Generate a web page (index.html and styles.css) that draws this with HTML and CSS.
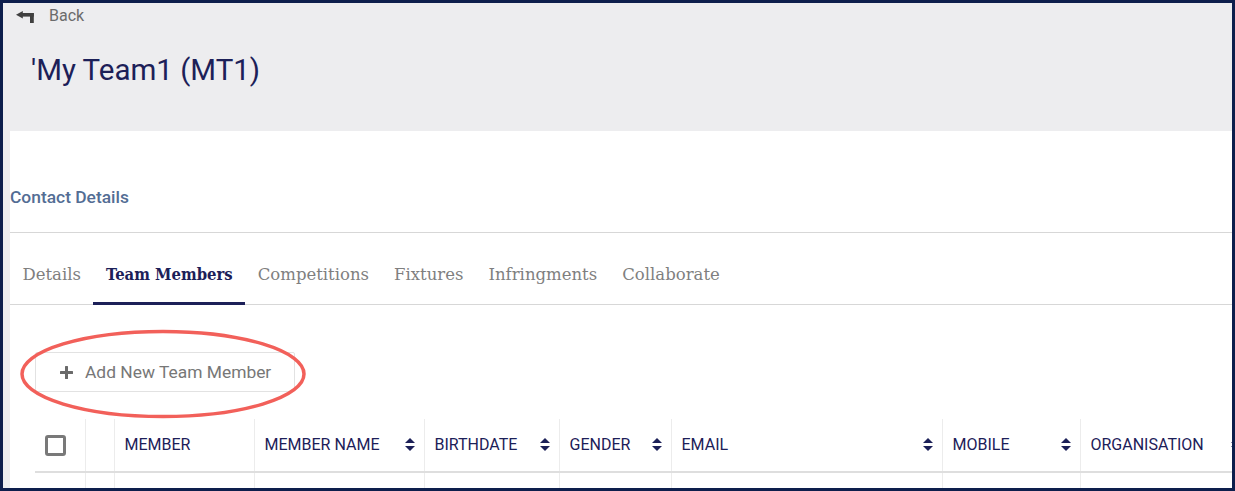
FILE: index.html
```html
<!DOCTYPE html>
<html lang="en">
<head>
<meta charset="utf-8">
<title>My Team1 (MT1)</title>
<link rel="stylesheet" href="styles.css">
</head>
<body>
<div class="frame">
  <header class="page-head">
    <a class="back" href="#">
      <svg class="back-icon" width="18" height="12" viewBox="0 0 18 12" aria-hidden="true">
        <path d="M0 3.8 L6.8 0 L6.8 7.6 Z" fill="#404040"/>
        <rect x="6" y="2" width="11.8" height="3.6" fill="#404040"/>
        <rect x="14" y="2" width="3.8" height="10" fill="#404040"/>
      </svg>
      <span>Back</span>
    </a>
    <h1 class="title">'My Team1 (MT1)</h1>
  </header>

  <main class="card">
    <div class="section-head">
      <h2 class="section-title">Contact Details</h2>
    </div>

    <nav class="tabs">
      <a class="tab" href="#">Details</a>
      <a class="tab active" href="#">Team Members</a>
      <a class="tab" href="#">Competitions</a>
      <a class="tab" href="#">Fixtures</a>
      <a class="tab" href="#">Infringments</a>
      <a class="tab" href="#">Collaborate</a>
    </nav>

    <div class="toolbar">
      <button class="add-btn" type="button">
        <svg class="plus" width="13" height="13" viewBox="0 0 13 13" aria-hidden="true">
          <rect x="5" y="0" width="3" height="13" rx="0.5" fill="#6a6a6a"/>
          <rect x="0" y="5" width="13" height="3" rx="0.5" fill="#6a6a6a"/>
        </svg>
        <span>Add New Team Member</span>
      </button>
      <svg class="highlight" width="292" height="94" viewBox="0 0 292 94" aria-hidden="true">
        <ellipse cx="146" cy="47" rx="141" ry="42.5" fill="none" stroke="#f2605a" stroke-width="3.5"/>
      </svg>
    </div>

    <table class="members">
      <colgroup>
        <col class="c-check"><col class="c-blank"><col class="c-member"><col class="c-name"><col class="c-birth"><col class="c-gender"><col class="c-email"><col class="c-mobile"><col class="c-org">
      </colgroup>
      <thead>
        <tr>
          <th><span class="checkbox"></span></th>
          <th></th>
          <th><div class="th-inner">MEMBER</div></th>
          <th><div class="th-inner">MEMBER NAME<span class="sort"></span></div></th>
          <th><div class="th-inner">BIRTHDATE<span class="sort"></span></div></th>
          <th><div class="th-inner">GENDER<span class="sort"></span></div></th>
          <th><div class="th-inner">EMAIL<span class="sort"></span></div></th>
          <th><div class="th-inner">MOBILE<span class="sort"></span></div></th>
          <th><div class="th-inner">ORGANISATION<span class="sort"></span></div></th>
        </tr>
      </thead>
      <tbody>
        <tr><td></td><td></td><td></td><td></td><td></td><td></td><td></td><td></td><td></td></tr>
      </tbody>
    </table>
  </main>
</div>
</body>
</html>
```

FILE: styles.css
```css
html, body {
  margin: 0;
  padding: 0;
}

body {
  font-family: Roboto, "Liberation Sans", Arial, sans-serif;
  background: #ffffff;
}

.frame {
  width: 1235px;
  height: 491px;
  box-sizing: border-box;
  border: 3px solid #0d1e4c;
  background: #ededef;
  overflow: hidden;
  display: flex;
  flex-direction: column;
}

/* ---------- header ---------- */
.page-head {
  height: 128px;
  flex: none;
  box-sizing: border-box;
  padding-top: 3px;
}

.back {
  display: flex;
  align-items: center;
  gap: 15px;
  padding-left: 13px;
  height: 20px;
  font-size: 16px;
  line-height: 20px;
  color: #6b6b6b;
  text-decoration: none;
}

.back-icon {
  flex: none;
  margin-top: 1px;
}

.title {
  margin: 26px 0 0 28px;
  font-size: 29.5px;
  line-height: 36px;
  font-weight: 400;
  color: #1c2058;
}

/* ---------- card ---------- */
.card {
  flex: 1;
  margin-left: 7px;
  background: #ffffff;
  overflow: hidden;
  min-width: 0;
}

.section-head {
  height: 102px;
  box-sizing: border-box;
  padding-top: 56px;
  border-bottom: 1px solid #d7d7d7;
}

.section-title {
  margin: 0;
  font-size: 17.4px;
  line-height: 20px;
  font-weight: 500;
  color: #536d94;
}

/* ---------- tabs ---------- */
.tabs {
  display: flex;
  height: 71px;
  border-bottom: 1px solid #d7d7d7;
}

.tab {
  height: 72px;
  box-sizing: border-box;
  padding: 14px 12.5px 0;
  display: flex;
  align-items: center;
  border-bottom: 3px solid transparent;
  font-family: "DejaVu Serif", "Liberation Serif", serif;
  font-size: 16.5px;
  color: #7f7f7f;
  text-decoration: none;
  white-space: nowrap;
}

.tab.active {
  font-weight: 700;
  font-stretch: condensed;
  color: #1c2058;
  border-bottom-color: #1c2058;
}

/* ---------- toolbar ---------- */
.toolbar {
  position: relative;
  padding: 47px 0 0 25px;
  height: 40px;
}

.add-btn {
  display: flex;
  align-items: center;
  gap: 12px;
  width: 260px;
  height: 40px;
  box-sizing: border-box;
  padding: 0 0 0 24px;
  border: 1px solid #e2e2e2;
  border-radius: 2px;
  background: #ffffff;
  font-family: Roboto, "Liberation Sans", Arial, sans-serif;
  font-size: 17.4px;
  color: #777777;
  cursor: pointer;
}

.plus {
  flex: none;
}

.highlight {
  position: absolute;
  left: 7px;
  top: 22px;
  z-index: 2;
  pointer-events: none;
}

/* ---------- table ---------- */
.members {
  margin: 27px 0 0 25px;
  width: 1215px;
  table-layout: fixed;
  border-collapse: collapse;
}

.c-check { width: 50px; }
.c-blank { width: 29px; }
.c-member { width: 140px; }
.c-name { width: 170px; }
.c-birth { width: 135px; }
.c-gender { width: 112px; }
.c-email { width: 271px; }
.c-mobile { width: 138px; }
.c-org { width: 170px; }

.members th,
.members td {
  padding: 0;
  border-left: 1px solid #ececec;
}

.members th:first-child,
.members td:first-child {
  border-left: none;
}

.members th {
  height: 52px;
  border-bottom: 2px solid #dedede;
  text-align: left;
  font-weight: 400;
  font-size: 16px;
  color: #1c2058;
  vertical-align: middle;
}

.members td {
  height: 40px;
}

.th-inner {
  display: flex;
  align-items: center;
  justify-content: space-between;
  padding: 0 9px 1px 10px;
  white-space: nowrap;
}

.checkbox {
  display: block;
  width: 21px;
  height: 21px;
  box-sizing: border-box;
  margin-left: 10px;
  border: 3px solid #797979;
  border-radius: 3px;
}

.sort {
  flex: none;
  width: 10px;
  height: 13px;
  background:
    linear-gradient(to bottom right, transparent 49%, #1c2058 51%) left top / 5px 5px no-repeat,
    linear-gradient(to bottom left, transparent 49%, #1c2058 51%) right top / 5px 5px no-repeat,
    linear-gradient(to top right, transparent 49%, #1c2058 51%) left bottom / 5px 5px no-repeat,
    linear-gradient(to top left, transparent 49%, #1c2058 51%) right bottom / 5px 5px no-repeat;
}
```
